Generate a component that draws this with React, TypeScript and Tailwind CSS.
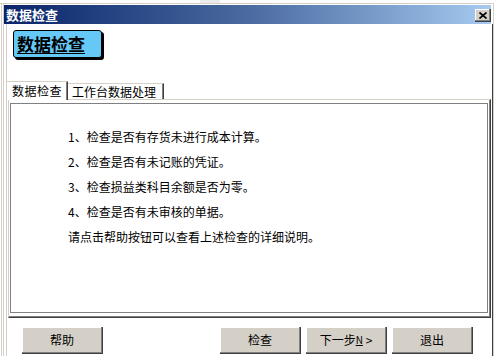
const lines = [
  "1、检查是否有存货未进行成本计算。",
  "2、检查是否有未记账的凭证。",
  "3、检查损益类科目余额是否为零。",
  "4、检查是否有未审核的单据。",
  "请点击帮助按钮可以查看上述检查的详细说明。",
];

function WinButton({ children, className = "" }: { children: React.ReactNode; className?: string }) {
  return (
    <button
      className={`w-[81px] h-[27px] bg-[#d4d0c8] border-r border-b border-[#404040] shadow-[inset_-1px_-1px_0_#808080,inset_1px_1px_0_#ffffff] text-[12px] leading-[12px] text-black flex items-center justify-center ${className}`}
    >
      {children}
    </button>
  );
}

function TitleBar() {
  return (
    <div className="w-[487px] h-[19px] flex items-start justify-between bg-gradient-to-r from-[#0a246a] via-[#4a6aa0] to-[#a6caf0]">
      <span className="pl-[2px] text-[13px] leading-[19px] font-bold text-white">数据检查</span>
      <button
        className="mt-[4px] w-[16px] h-[13px] bg-[#d4d0c8] border-r border-b border-[#404040] shadow-[inset_-1px_-1px_0_#808080,inset_1px_1px_0_#ffffff] flex items-center justify-center"
        aria-label="关闭"
      >
        <svg width="8" height="7" viewBox="0 0 8 7">
          <path d="M0.5 0.5 L7.5 6.5 M7.5 0.5 L0.5 6.5" stroke="#000" strokeWidth="1.6" />
        </svg>
      </button>
    </div>
  );
}

export default function App() {
  return (
    <div className="w-[494px] h-[356px] overflow-hidden bg-white flex flex-col text-black font-['Noto_Sans_CJK_SC','Liberation_Sans',sans-serif]">
      <div className="h-[3px] flex">
        <div className="ml-[200px] w-[20px] bg-[#ebebeb]" />
      </div>
      <div className="flex-1 flex border-t border-[#d4d0c8]">
        <div className="w-[1px]" />
        <div className="w-[1px] bg-[#d4d0c8]" />
        <div className="w-[1px]" />
        <div className="w-[1px] bg-[#d4d0c8]" />
        <div className="w-[489px] flex flex-col pt-[1px]">
          <TitleBar />
          <div className="flex-1 flex">
            <div className="w-[2px]" />
            <div className="w-[1px] bg-[#d4d0c8]" />
            <div className="w-[1px]" />
            <div className="w-[483px] flex flex-col">
              {/* blue label */}
              <div className="ml-[5px] mt-[6px] w-[89px] h-[28px] rounded-[3px] border border-black bg-[#66c8f6] shadow-[2px_2px_0_#000] flex items-center pl-[3px]">
                <span className="text-[17px] leading-[17px] font-bold pb-[1px] border-b border-black">数据检查</span>
              </div>

              {/* tabs */}
              <div className="relative z-10 mt-[23px] -ml-[2px] -mb-[1px] flex items-end">
                <div className="w-[62px] h-[19px] bg-white border-l border-t border-[#d4d0c8] border-r border-r-[#404040] shadow-[inset_-1px_0_0_#808080] pl-[5px] text-[12px] leading-[17px] tracking-[0.5px]">
                  数据检查
                </div>
                <div className="mb-[1px] w-[96px] h-[16px] bg-white border-t border-[#d4d0c8] border-r border-r-[#404040] shadow-[inset_-1px_0_0_#808080] pl-[4px] text-[12px] leading-[15px]">
                  工作台数据处理
                </div>
              </div>

              {/* panel */}
              <div className="h-[219px] border border-l-[#d4d0c8] border-t-[#d4d0c8] border-r-[#404040] border-b-[#404040]">
                <div className="h-full border-r border-b border-[#808080] pl-[1px] pt-[3px] pr-[1px] pb-[3px]">
                  <div className="h-full border border-[#808080] pl-[57px] pt-[20px]">
                    {lines.map((t) => (
                      <p key={t} className="text-[12px] leading-[25px]">
                        {t}
                      </p>
                    ))}
                  </div>
                </div>
              </div>

              {/* buttons */}
              <div className="mt-[9px] flex">
                <WinButton className="ml-[14px]">帮助</WinButton>
                <WinButton className="ml-[117px]">检查</WinButton>
                <WinButton className="ml-[5px]">
                  下一步<span className="underline text-[10px]">N</span>&nbsp;&gt;
                </WinButton>
                <WinButton className="ml-[5px]">退出</WinButton>
              </div>
            </div>
            <div className="w-[1px]" />
            <div className="w-[1px] bg-[#404040]" />
          </div>
        </div>
        <div className="w-[1px] bg-[#d4d0c8]" />
      </div>
    </div>
  );
}
